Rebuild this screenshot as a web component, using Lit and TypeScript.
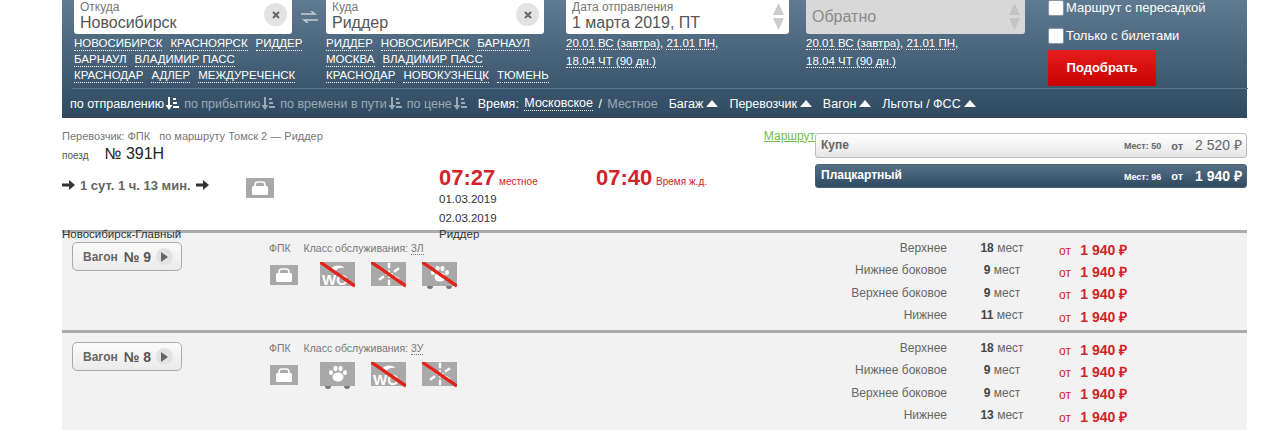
import { LitElement, html, css, svg } from 'lit';
import { customElement } from 'lit/decorators.js';

interface Car {
  num: number;
  cls: string;
  icons: string[];
  seats: [string, number][];
}

const CARS: Car[] = [
  {
    num: 9,
    cls: '3Л',
    icons: ['bag', 'wc-off', 'snow-off', 'pet-off'],
    seats: [['Верхнее', 18], ['Нижнее боковое', 9], ['Верхнее боковое', 9], ['Нижнее', 11]],
  },
  {
    num: 8,
    cls: '3У',
    icons: ['bag', 'pet', 'wc-off', 'snow-off'],
    seats: [['Верхнее', 18], ['Нижнее боковое', 9], ['Верхнее боковое', 9], ['Нижнее', 13]],
  },
];

const FROM = [
  ['НОВОСИБИРСК', 'КРАСНОЯРСК', 'РИДДЕР'],
  ['БАРНАУЛ', 'ВЛАДИМИР ПАСС'],
  ['КРАСНОДАР', 'АДЛЕР', 'МЕЖДУРЕЧЕНСК'],
];
const TO = [
  ['РИДДЕР', 'НОВОСИБИРСК', 'БАРНАУЛ'],
  ['МОСКВА', 'ВЛАДИМИР ПАСС'],
  ['КРАСНОДАР', 'НОВОКУЗНЕЦК', 'ТЮМЕНЬ'],
];

const sortIcon = html`<svg class="sort-ico" width="14" height="13" viewBox="0 0 14 13">
  <path d="M3 0h2v8h2.5L4 13 .5 8H3z" fill="currentColor" />
  <path d="M8 1h3v2H8zM8 5h4v2H8zM8 9h6v2H8z" fill="currentColor" />
</svg>`;

const tri = html`<svg class="tri" width="12" height="7" viewBox="0 0 12 7"><path d="M6 0l6 7H0z" fill="#fff" /></svg>`;

const arrow = html`<svg width="13" height="10" viewBox="0 0 13 10"><path d="M0 3.5h7V0l6 5-6 5V6.5H0z" fill="#333" /></svg>`;

const bagGlyph = (x: number, y: number) => svg`
  <path d="M${x + 3} ${y + 5}v-2a3 3 0 0 1 3-3h4a3 3 0 0 1 3 3v2" fill="none" stroke="#fff" stroke-width="1.6" />
  <rect x=${x} y=${y + 4} width="16" height="9" rx="1.5" fill="#fff" />`;

const wcGlyph = svg`
  <text x="2" y="23" font-family="Liberation Sans, sans-serif" font-weight="700" font-size="15" fill="#fff">WC</text>
  <path d="M10 8c3-5 10-6 15-2-5-1-8 0-10 4z" fill="#fff" />`;

const snowGlyph = svg`
  <g stroke="#fff" stroke-width="2.4" stroke-linecap="square">
    <path d="M18 2v3M18 19v3M9 7l3 2M24 15l3 2M9 17l3-2M24 9l3-2" />
  </g>
  <path d="M14 12h8M18 8v8" stroke="#fff" stroke-width="1.4" />`;

const pawGlyph = (dy: number) => svg`
  <g fill="#fff" transform="translate(0 ${dy})">
    <ellipse cx="18" cy="15" rx="5.5" ry="4.5" />
    <ellipse cx="11" cy="10.5" rx="2" ry="2.6" />
    <ellipse cx="15.5" cy="6.5" rx="2" ry="2.8" />
    <ellipse cx="20.5" cy="6.5" rx="2" ry="2.8" />
    <ellipse cx="25" cy="10.5" rx="2" ry="2.6" />
  </g>`;

const strike = svg`<path d="M0 0L35 24" stroke="#e2231a" stroke-width="3.4" />`;

const carBody = svg`
  <path d="M0 0h35v24H0z" fill="#a9a9a9" />
  <path d="M5 24h6a3 3 0 0 1-6 0zM24 24h6a3 3 0 0 1-6 0z" fill="#777" />`;

function icon(kind: string) {
  if (kind === 'bag') {
    return html`<svg class="ico-bag" width="28" height="20" viewBox="0 0 28 20">
      <rect width="28" height="20" fill="#a9a9a9" />${bagGlyph(6, 4)}
    </svg>`;
  }
  const body =
    kind === 'wc-off'
      ? svg`<path d="M0 0h35v24H0z" fill="#a9a9a9" />${wcGlyph}${strike}`
      : kind === 'snow-off'
        ? svg`<path d="M0 0h35v24H0z" fill="#a9a9a9" />${snowGlyph}${strike}`
        : kind === 'pet-off'
          ? svg`${carBody}${pawGlyph(0)}${strike}`
          : svg`${carBody}${pawGlyph(0)}`;
  return html`<svg class="ico" width="35" height="28" viewBox="0 0 35 28">${body}</svg>`;
}

@customElement('app-root')
export class AppRoot extends LitElement {
  static styles = css`
    :host {
      display: block;
      width: 1280px;
      height: 434px;
      overflow: hidden;
      background: #fff;
      font-family: 'Liberation Sans', Arial, sans-serif;
      color: #333;
    }

    .wrap {
      margin: 0 33px 0 62px;
    }

    .search {
      height: 118px;
      box-sizing: border-box;
      background: linear-gradient(#5f7a91, #2f4a60);
      padding-left: 10px;
      color: #fff;
    }

    .form {
      display: flex;
      height: 89px;
      box-sizing: border-box;
      border-bottom: 1px solid #5d7688;
      margin-right: -1px;
    }

    .col {
      width: 218px;
      flex: none;
    }

    .col.from { margin-left: 2px; }
    .swap { width: 34px; flex: none; display: flex; justify-content: center; padding-top: 11px; box-sizing: border-box; }
    .col.date { width: 223px; margin-left: 22px; }
    .col.back { width: 219px; margin-left: 17px; }

    .field {
      position: relative;
      height: 34px;
      box-sizing: border-box;
      background: #fff;
      border-radius: 0 0 3px 3px;
      padding: 1px 0 0 6px;
      color: #555;
    }

    .field.off { background: #d8d8d8; color: #8b8b8b; }

    .field small {
      display: block;
      font-size: 12px;
      line-height: 13px;
      color: #777;
    }

    .field span {
      display: block;
      font-size: 16px;
      line-height: 18px;
    }

    .field.off span { padding-top: 7px; }

    .clear {
      position: absolute;
      right: 5px;
      top: 3px;
      width: 23px;
      height: 23px;
      border-radius: 50%;
      background: #e3e3e3;
      color: #666;
      display: flex;
      align-items: center;
      justify-content: center;
    }

    .stepper {
      position: absolute;
      right: 5px;
      top: 3px;
      display: flex;
      flex-direction: column;
      gap: 3px;
    }

    .links {
      margin-top: 0;
      font-size: 11.5px;
      line-height: 17.5px;
      padding-top: 1px;
    }

    .links .line {
      display: flex;
      gap: 8px;
      white-space: nowrap;
    }

    .links a {
      color: #fff;
      border-bottom: 1px dotted #fff;
      line-height: 13px;
      height: 13px;
      margin-top: 2px;
    }

    .dates {
      font-size: 11.5px;
      line-height: 17.5px;
      padding-top: 1px;
    }

    .dates a {
      border-bottom: 1px dotted #fff;
    }

    .opts {
      margin-left: 23px;
      font-size: 13px;
      line-height: 16px;
    }

    .check {
      display: flex;
      align-items: center;
      gap: 2px;
      height: 25px;
    }

    .check.first { height: 16px; align-items: flex-end; padding-bottom: 2px; margin-bottom: 5px; }

    .check i {
      width: 16px;
      height: 16px;
      background: #fff;
      border-radius: 2px;
      border: 1px solid #8a99a5;
      box-sizing: border-box;
    }

    .btn {
      width: 108px;
      height: 36px;
      margin-top: 2px;
      background: linear-gradient(#e71e1e, #c70000);
      font-size: 13px;
      font-weight: 700;
      display: flex;
      align-items: center;
      justify-content: center;
    }

    .filters {
      display: flex;
      align-items: center;
      height: 29px;
      margin-left: -2px;
      font-size: 13px;
      white-space: nowrap;
    }

    .sort { display: flex; align-items: center; gap: 1px; margin-right: 5px; color: #9aa9b5; font-size: 12.5px; }
    .sort.on { color: #fff; font-weight: 400; }
    .sort-ico { flex: none; }
    .sort.last { margin-right: 11px; }
    .flt { display: flex; align-items: center; gap: 2px; margin-right: 11px; font-size: 12.5px; }
    .tri { margin-left: 1px; }
    .u { border-bottom: 1px dotted #fff; }
    .dim { color: #9aa9b5; }

    .train {
      display: flex;
      height: 112px;
      box-sizing: border-box;
      padding-top: 11px;
    }

    .t-left {
      width: 753px;
      flex: none;
      display: grid;
      grid-template-columns: 184px 193px 157px 1fr;
      grid-template-rows: 13px 24px 24px 18px 20px;
      color: #333;
      font-size: 11px;
      align-items: center;
    }

    .carrier { grid-column: 1 / 4; color: #777; font-size: 11px; }
    .carrier b { font-weight: 400; margin-left: 6px; }
    .route-link { color: #6fbf4a; font-size: 12px; text-decoration: underline; text-align: right; grid-column: 4; }
    .tnum { grid-column: 1 / 5; font-size: 10px; color: #555; }
    .tnum b { font-size: 16px; font-weight: 400; color: #222; margin-left: 13px; }
    .time { color: #d2232a; font-size: 10px; white-space: nowrap; }
    .time b { font-size: 22px; font-weight: 700; margin-right: 1px; }
    .dur { grid-row: 3 / 5; color: #666; font-size: 13px; font-weight: 700; display: flex; align-items: center; gap: 5px; white-space: nowrap; padding-bottom: 4px; }
    .bagcell { grid-row: 3 / 5; padding-left: 0; }
    .small { font-size: 11.5px; color: #333; }

    .tariffs {
      width: 432px;
      flex: none;
      margin-left: 0;
      display: flex;
      flex-direction: column;
      gap: 6px;
      padding-top: 4px;
    }

    .tariff {
      height: 25px;
      box-sizing: border-box;
      border-radius: 3px;
      border: 1px solid #bbb;
      background: linear-gradient(#fff, #e6e6e6);
      color: #666;
      display: flex;
      align-items: center;
      padding: 0 4px 2px 5px;
      font-weight: 700;
      font-size: 12px;
    }

    .tariff.on {
      height: 24px;
      background: linear-gradient(#567088, #2f4a60);
      border-color: #4a6276;
      color: #fff;
    }

    .tariff .name { flex: 1; }
    .tariff .cnt { font-size: 9px; margin-right: 10px; padding-top: 3px; }
    .tariff .ot { font-size: 11px; margin-right: 12px; padding-top: 2px; }
    .tariff .sum { font-size: 14px; font-weight: 400; }
    .tariff.on .sum { font-weight: 700; }

    .car {
      display: flex;
      height: 100px;
      box-sizing: border-box;
      border-top: 3px solid #aaa;
      background: #f2f2f2;
      padding: 9px 0 0 10px;
    }

    .car-btn {
      width: 110px;
      height: 29px;
      box-sizing: border-box;
      flex: none;
      border: 1px solid #aaa;
      border-radius: 5px;
      background: linear-gradient(#fbfbfb, #eaeaea);
      display: flex;
      align-items: center;
      padding-left: 10px;
      font-size: 12px;
      font-weight: 700;
      color: #666;
    }

    .car-btn b { font-size: 14px; margin-left: 6px; color: #555; }

    .play {
      width: 17px;
      height: 17px;
      border-radius: 50%;
      background: #e3e3e3;
      display: flex;
      align-items: center;
      justify-content: center;
      margin-left: 5px;
    }

    .info {
      width: 531px;
      margin-left: 87px;
      flex: none;
      font-size: 10.5px;
      color: #777;
    }

    .info .lbl { margin-left: 10px; }
    .info .cls { border-bottom: 1px dotted #777; }

    .icons {
      display: flex;
      gap: 16px;
      align-items: flex-start;
      margin-top: 8px;
      padding-left: 1px;
    }

    .ico-bag { margin-top: 3px; margin-right: 6px; }

    .seats {
      display: grid;
      grid-template-columns: 147px 110px auto;
      grid-auto-rows: 22.3px;
      align-items: center;
      font-size: 12px;
      margin-top: -5px;
      align-self: flex-start;
    }

    .seats .pl { text-align: right; color: #666; }
    .seats .ct { text-align: center; color: #666; }
    .seats .ct b { color: #444; }
    .seats .pr { color: #d2232a; padding-left: 2px; white-space: nowrap; padding-top: 2px; }
    .seats .pr b { font-size: 14px; font-weight: 700; margin-left: 6px; }
  `;

  private renderLinks(rows: string[][]) {
    return html`<div class="links">
      ${rows.map((r) => html`<div class="line">${r.map((c) => html`<a>${c}</a>`)}</div>`)}
    </div>`;
  }

  private renderDates() {
    return html`<div class="dates">
      <a>20.01 ВС (завтра)</a>, <a>21.01 ПН</a>,<br /><a>18.04 ЧТ (90 дн.)</a>
    </div>`;
  }

  private renderCar(car: Car) {
    return html`<div class="car">
      <div class="car-btn">
        Вагон <b>№ ${car.num}</b>
        <span class="play"
          ><svg width="7" height="10" viewBox="0 0 7 10"><path d="M0 0l7 5-7 5z" fill="#666" /></svg
        ></span>
      </div>
      <div class="info">
        ФПК <span class="lbl">Класс обслуживания:</span> <span class="cls">${car.cls}</span>
        <div class="icons">${car.icons.map(icon)}</div>
      </div>
      <div class="seats">
        ${car.seats.map(
          ([label, count]) => html`
            <div class="pl">${label}</div>
            <div class="ct"><b>${count}</b> мест</div>
            <div class="pr">от <b>1 940 ₽</b></div>
          `
        )}
      </div>
    </div>`;
  }

  render() {
    return html`
      <div class="wrap">
        <div class="search">
          <div class="form">
            <div class="col from">
              <div class="field">
                <small>Откуда</small><span>Новосибирск</span>
                <div class="clear">
                  <svg width="8" height="8" viewBox="0 0 8 8"><path d="M1 1l6 6M7 1L1 7" stroke="#666" stroke-width="2" /></svg>
                </div>
              </div>
              ${this.renderLinks(FROM)}
            </div>
            <div class="swap">
              <svg width="17" height="12" viewBox="0 0 17 12">
                <path d="M0 3h13M10 0l4 3-4 0M17 9H4M7 12L3 9h4" stroke="#c5d0d8" stroke-width="1.4" fill="none" />
              </svg>
            </div>
            <div class="col to">
              <div class="field">
                <small>Куда</small><span>Риддер</span>
                <div class="clear">
                  <svg width="8" height="8" viewBox="0 0 8 8"><path d="M1 1l6 6M7 1L1 7" stroke="#666" stroke-width="2" /></svg>
                </div>
              </div>
              ${this.renderLinks(TO)}
            </div>
            <div class="col date">
              <div class="field">
                <small>Дата отправления</small><span>1 марта 2019, ПТ</span>
                <div class="stepper">
                  <svg width="11" height="12" viewBox="0 0 11 12"><path d="M5.5 0L11 12H0z" fill="#ccc" /></svg>
                  <svg width="11" height="12" viewBox="0 0 11 12"><path d="M0 0h11L5.500 12z" fill="#ccc" /></svg>
                </div>
              </div>
              ${this.renderDates()}
            </div>
            <div class="col back">
              <div class="field off">
                <span>Обратно</span>
                <div class="stepper">
                  <svg width="11" height="12" viewBox="0 0 11 12"><path d="M5.5 0L11 12H0z" fill="#c4c4c4" /></svg>
                  <svg width="11" height="12" viewBox="0 0 11 12"><path d="M0 0h11L5.500 12z" fill="#c4c4c4" /></svg>
                </div>
              </div>
              ${this.renderDates()}
            </div>
            <div class="opts">
              <div class="check first"><i></i>Маршрут с пересадкой</div>
              <div class="check"><i></i>Только с билетами</div>
              <div class="btn">Подобрать</div>
            </div>
          </div>
          <div class="filters">
            <span class="sort on">по отправлению${sortIcon}</span>
            <span class="sort">по прибытию${sortIcon}</span>
            <span class="sort">по времени в пути${sortIcon}</span>
            <span class="sort last">по цене${sortIcon}</span>
            <span class="flt">Время:&nbsp;<span class="u">Московское</span>&nbsp;/&nbsp;<span class="dim">Местное</span></span>
            <span class="flt">Багаж${tri}</span>
            <span class="flt">Перевозчик${tri}</span>
            <span class="flt">Вагон${tri}</span>
            <span class="flt">Льготы / ФСС${tri}</span>
          </div>
        </div>

        <div class="train">
          <div class="t-left">
            <div class="carrier">Перевозчик: ФПК <b>по маршруту Томск 2 — Риддер</b></div>
            <div class="route-link">Маршрут</div>
            <div class="tnum">поезд <b>№ 391Н</b></div>
            <div class="time"><b>07:27</b> местное</div>
            <div class="dur">${arrow} 1 сут. 1 ч. 13 мин. ${arrow}</div>
            <div class="time"><b>07:40</b> Время ж.д.</div>
            <div class="bagcell">${icon('bag')}</div>
            <div class="small">01.03.2019</div>
            <div class="small" style="grid-column: 3">02.03.2019</div>
            <div class="small" style="grid-column: 1">Новосибирск-Главный</div>
            <div class="small" style="grid-column: 3">Риддер</div>
          </div>
          <div class="tariffs">
            <div class="tariff">
              <span class="name">Купе</span><span class="cnt">Мест: 50</span><span class="ot">от</span
              ><span class="sum">2 520 ₽</span>
            </div>
            <div class="tariff on">
              <span class="name">Плацкартный</span><span class="cnt">Мест: 96</span><span class="ot">от</span
              ><span class="sum">1 940 ₽</span>
            </div>
          </div>
        </div>

        ${CARS.map((c) => this.renderCar(c))}
      </div>
    `;
  }
}

declare global {
  interface HTMLElementTagNameMap {
    'app-root': AppRoot;
  }
}
